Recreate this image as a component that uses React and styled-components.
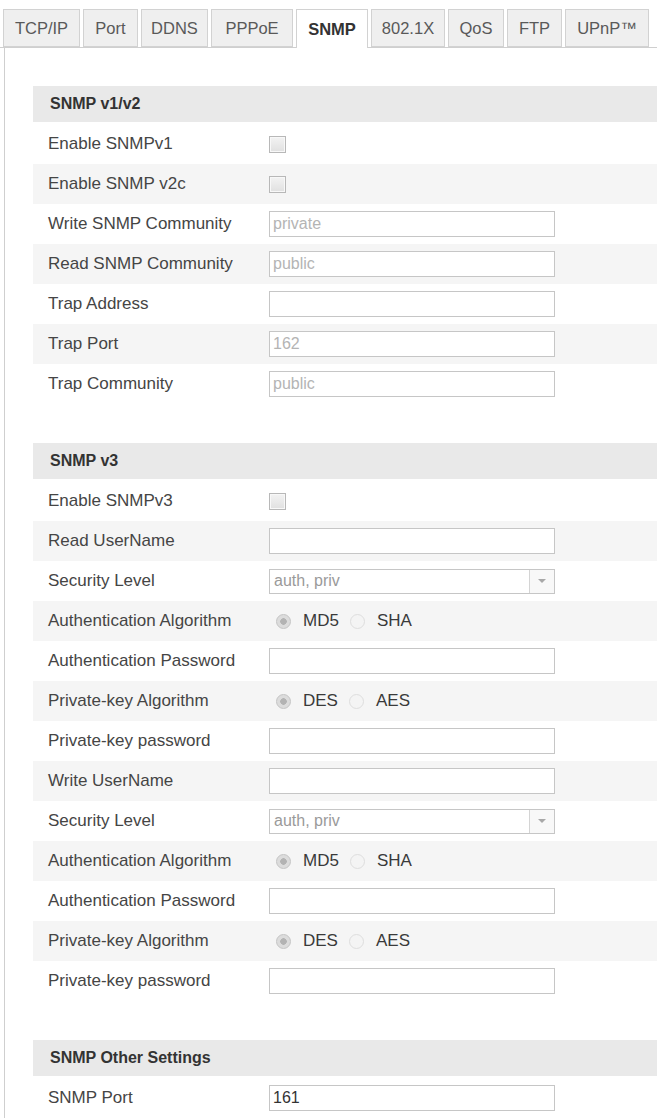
import React from "react";
import styled, { createGlobalStyle } from "styled-components";

const GlobalStyle = createGlobalStyle`
    body {
        margin: 0;
        background: #fff;
        font-family: "Liberation Sans", Arial, sans-serif;
        color: #444;
    }
`;

const Page = styled.div`
    width: 662px;
    height: 1118px;
    overflow: hidden;
    padding-top: 9px;
    box-sizing: border-box;
`;

const TabBar = styled.div`
    display: flex;
    gap: 3px;
    padding-left: 3px;
    width: 654px;
    border-bottom: 1px solid #cfcfcf;
    height: 38px;
`;

const Tab = styled.div`
    width: ${(p) => p.$w}px;
    height: ${(p) => (p.$active ? 39 : 38)}px;
    box-sizing: border-box;
    display: flex;
    align-items: center;
    justify-content: center;
    border: 1px solid #d2d2d2;
    border-bottom: ${(p) => (p.$active ? "none" : "1px solid #d2d2d2")};
    background: ${(p) => (p.$active ? "#fff" : "#efefef")};
    font-size: 16.5px;
    font-weight: ${(p) => (p.$active ? 700 : 400)};
    color: ${(p) => (p.$active ? "#333" : "#595959")};
    white-space: nowrap;
`;

const Panel = styled.div`
    margin-left: 4px;
    width: 653px;
    border-left: 1px solid #cfcfcf;
    padding: 38px 0 0 28px;
    box-sizing: border-box;
`;

const Section = styled.div`
    & + & {
        margin-top: 39px;
    }
`;

const SectionHead = styled.div`
    height: 36px;
    background: #e9e9e9;
    display: flex;
    align-items: center;
    padding-left: 17px;
    font-size: 16px;
    font-weight: 700;
    color: #333;
    margin-bottom: 2px;
`;

const Row = styled.div`
    height: 40px;
    display: flex;
    align-items: center;
    &:nth-child(even) {
        background: #f5f5f5;
    }
`;

const Label = styled.div`
    width: 221px;
    padding-left: 15px;
    font-size: 17px;
    color: #454545;
    white-space: nowrap;
`;

const Check = styled.span`
    width: 17px;
    height: 17px;
    box-sizing: border-box;
    border: 1px solid #b8b8b8;
    background: linear-gradient(#f3f3f3, #e0e0e0);
    box-shadow: inset 0 0 0 1px #f8f8f8;
    display: block;
`;

const TextBox = styled.div`
    width: 286px;
    height: 26px;
    box-sizing: border-box;
    border: 1px solid #c6c6c6;
    background: #fff;
    display: flex;
    align-items: center;
    padding-left: 3px;
    font-size: 16px;
    color: ${(p) => (p.$muted ? "#b4b4b4" : "#333")};
`;

const SelectBox = styled(TextBox)`
    height: 25px;
    padding-left: 4px;
    color: #9a9a9a;
    justify-content: space-between;
    padding-right: 0;
`;

const Arrow = styled.span`
    width: 24px;
    height: 100%;
    border-left: 1px solid #d4d4d4;
    background: #f8f8f8;
    display: flex;
    align-items: center;
    justify-content: center;
    &::after {
        content: "";
        border-left: 4px solid transparent;
        border-right: 4px solid transparent;
        border-top: 4px solid #a8a8a8;
    }
`;

const RadioGroup = styled.div`
    display: flex;
    align-items: center;
    padding-left: 7px;
    font-size: 17px;
    color: #3a3a3a;
`;

const Radio = styled.span`
    width: 15px;
    height: 15px;
    box-sizing: border-box;
    border-radius: 50%;
    border: 1px solid ${(p) => (p.$on ? "#c4c4c4" : "#dedede")};
    background: ${(p) =>
        p.$on
            ? "radial-gradient(circle, #b3b3b3 0 3px, #dcdcdc 3.5px)"
            : "#f4f4f4"};
    margin-right: 12px;
`;

const RadioText = styled.span`
    margin-right: 11px;
`;

const tabs = [
    ["TCP/IP", 77],
    ["Port", 55],
    ["DDNS", 67],
    ["PPPoE", 82],
    ["SNMP", 72],
    ["802.1X", 74],
    ["QoS", 56],
    ["FTP", 55],
    ["UPnP™", 84],
];

const Control = ({ item }) => {
    if (item.check) return <Check />;
    if (item.select)
        return (
            <SelectBox>
                {item.select}
                <Arrow />
            </SelectBox>
        );
    if (item.radios)
        return (
            <RadioGroup>
                <Radio $on />
                <RadioText>{item.radios[0]}</RadioText>
                <Radio />
                <RadioText>{item.radios[1]}</RadioText>
            </RadioGroup>
        );
    return <TextBox $muted={item.muted}>{item.value}</TextBox>;
};

const userBlock = (name) => [
    { label: name, value: "" },
    { label: "Security Level", select: "auth, priv" },
    { label: "Authentication Algorithm", radios: ["MD5", "SHA"] },
    { label: "Authentication Password", value: "" },
    { label: "Private-key Algorithm", radios: ["DES", "AES"] },
    { label: "Private-key password", value: "" },
];

const sections = [
    {
        title: "SNMP v1/v2",
        rows: [
            { label: "Enable SNMPv1", check: true },
            { label: "Enable SNMP v2c", check: true },
            { label: "Write SNMP Community", value: "private", muted: true },
            { label: "Read SNMP Community", value: "public", muted: true },
            { label: "Trap Address", value: "" },
            { label: "Trap Port", value: "162", muted: true },
            { label: "Trap Community", value: "public", muted: true },
        ],
    },
    {
        title: "SNMP v3",
        rows: [
            { label: "Enable SNMPv3", check: true },
            ...userBlock("Read UserName"),
            ...userBlock("Write UserName"),
        ],
    },
    {
        title: "SNMP Other Settings",
        rows: [{ label: "SNMP Port", value: "161" }],
    },
];

const App = () => {
    return (
        <Page>
            <GlobalStyle />
            <TabBar>
                {tabs.map(([name, w]) => (
                    <Tab key={name} $w={w} $active={name === "SNMP"}>
                        {name}
                    </Tab>
                ))}
            </TabBar>
            <Panel>
                {sections.map((s) => (
                    <Section key={s.title}>
                        <SectionHead>{s.title}</SectionHead>
                        <div>
                            {s.rows.map((r, i) => (
                                <Row key={i}>
                                    <Label>{r.label}</Label>
                                    <Control item={r} />
                                </Row>
                            ))}
                        </div>
                    </Section>
                ))}
            </Panel>
        </Page>
    );
};

export default App;
